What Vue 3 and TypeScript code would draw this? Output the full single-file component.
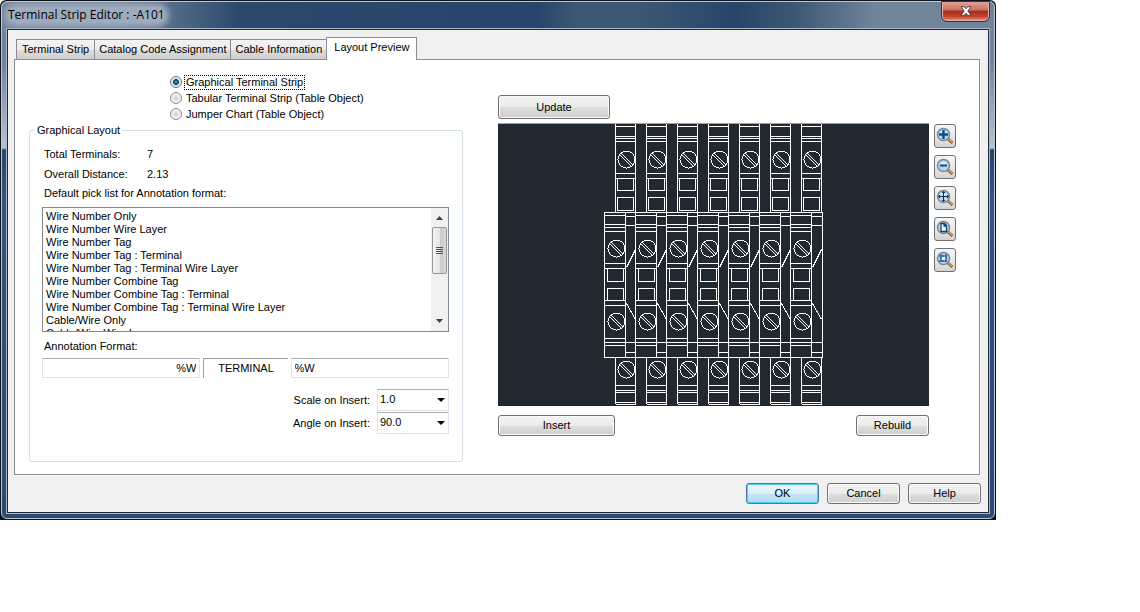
<script setup lang="ts">
import { ref } from 'vue'

const tabs = ['Terminal Strip', 'Catalog Code Assignment', 'Cable Information', 'Layout Preview']
const activeTab = ref('Layout Preview')

const layouts = [
  { id: 'graphical', label: 'Graphical Terminal Strip' },
  { id: 'tabular', label: 'Tabular Terminal Strip (Table Object)' },
  { id: 'jumper', label: 'Jumper Chart (Table Object)' },
]
const layout = ref('graphical')

const formats = [
  'Wire Number Only',
  'Wire Number Wire Layer',
  'Wire Number Tag',
  'Wire Number Tag : Terminal',
  'Wire Number Tag : Terminal Wire Layer',
  'Wire Number Combine Tag',
  'Wire Number Combine Tag : Terminal',
  'Wire Number Combine Tag : Terminal Wire Layer',
  'Cable/Wire Only',
  'Cable/Wire Wire Layer',
]
const picked = ref('')
const leftFormat = ref('%W')
const rightFormat = ref('%W')
const scale = ref('1.0')
const angle = ref('90.0')

const zoomTools = ['Zoom In', 'Zoom Out', 'Pan', 'Zoom Extents', 'Zoom Window']

const pitch = 31
const terminals = [0, 1, 2, 3, 4, 5, 6].map((n) => n * pitch)
</script>

<template>
  <main class="desktop">
    <section class="window" aria-label="Terminal Strip Editor">
      <div class="frame">
        <header class="titlebar">
          <h1 class="title">Terminal Strip Editor : -A101</h1>
          <button class="close" type="button" aria-label="Close">
            <svg width="12" height="10" viewBox="0 0 12 10">
              <path d="M1 .7h3.2L6 2.8 7.8.7H11L7.8 5 11 9.3H7.8L6 7.2 4.200 9.3H1L4.200 5z" fill="#fff" stroke="#54373c" stroke-width=".9" />
            </svg>
          </button>
        </header>

        <div class="client">
          <nav class="tabs" role="tablist">
            <button
              v-for="tab in tabs"
              :key="tab"
              type="button"
              role="tab"
              class="tab"
              :class="{ active: tab === activeTab }"
              :aria-selected="tab === activeTab"
              @click="activeTab = tab"
            >{{ tab }}</button>
          </nav>

          <div class="pane">
            <div class="settings">
              <div class="choices" role="radiogroup" aria-label="Layout type">
                <label v-for="item in layouts" :key="item.id" class="choice">
                  <input v-model="layout" type="radio" name="layout" :value="item.id" />
                  <span :class="{ focused: item.id === layout }">{{ item.label }}</span>
                </label>
              </div>

              <fieldset class="group">
                <legend>Graphical Layout</legend>
                <dl class="facts">
                  <dt>Total Terminals:</dt>
                  <dd>7</dd>
                  <dt>Overall Distance:</dt>
                  <dd>2.13</dd>
                </dl>
                <label class="caption" for="formats">Default pick list for Annotation format:</label>
                <div class="listbox">
                  <select id="formats" v-model="picked" size="9">
                    <option v-for="f in formats" :key="f" :value="f">{{ f }}</option>
                  </select>
                  <div class="scrollbar" aria-hidden="true">
                    <svg class="arrow" viewBox="0 0 7 4"><path d="M0 4L3.500 0 7 4z" /></svg>
                    <div class="thumb"><i></i><i></i><i></i><i></i></div>
                    <svg class="arrow end" viewBox="0 0 7 4"><path d="M0 0h7L3.500 4z" /></svg>
                  </div>
                </div>
                <label class="caption annotation" for="left-format">Annotation Format:</label>
                <div class="formats">
                  <input id="left-format" v-model="leftFormat" class="field right" type="text" />
                  <div class="middle">TERMINAL</div>
                  <input v-model="rightFormat" class="field" type="text" aria-label="Right annotation format" />
                </div>
                <div class="inserts">
                  <label for="scale">Scale on Insert:</label>
                  <div class="combo">
                    <select id="scale" v-model="scale"><option>1.0</option></select>
                  </div>
                  <label for="angle">Angle on Insert:</label>
                  <div class="combo">
                    <select id="angle" v-model="angle"><option>90.0</option></select>
                  </div>
                </div>
              </fieldset>
            </div>

            <div class="preview">
              <button type="button" class="btn update">Update</button>
              <div class="stage">
                <svg class="drawing" viewBox="498 124 431 282" role="img" aria-label="Terminal strip preview">
                  <defs>
                    <g id="screw">
                      <circle r="8.500" />
                      <path d="M-5.500-6.500L6.500 5.500M-7-5L5 7" />
                    </g>
                    <g id="rear">
                      <path d="M615.500 124v88M635.500 124v88M615.500 126.500h20M615.500 136.500h20M615.500 138.500h20M615.500 141.500h20M615.500 173.500h20M615.500 178.500h20" />
                      <path d="M617.500 178.500h16v12h-16zM617.500 197.500h16v13h-16z" />
                      <use href="#screw" x="626.500" y="159.500" />
                      <path d="M615.500 357v47M635.500 357v47M615.500 385.500h20M615.500 390.500h20M615.500 392.500h20M615.500 402.500h20M615.500 404.500h20" />
                      <use href="#screw" x="626.500" y="369.500" />
                    </g>
                    <g id="front">
                      <path d="M604.500 212v145M625.500 212v145M604.500 215.500h21M604.500 224.500h21M604.500 227.500h21M604.500 231.500h21M604.500 263.500h21M604.500 268.500h21M604.500 300.500h21M604.500 305.500h21M604.500 338.500h21M604.500 345.500h21" />
                      <path d="M607.500 268.500h16v13h-16zM607.500 288.500h16v12h-16z" />
                      <use href="#screw" x="616.500" y="248.500" />
                      <use href="#screw" x="616.500" y="321.500" />
                      <path d="M625.500 216.500h10M625.500 225.500h10M625.500 352.500h10M626.500 267.500L635.500 249.500M626.500 303.500L635.500 319.500" />
                    </g>
                  </defs>
                  <g class="lines">
                    <use v-for="x in terminals" :key="'r' + x" href="#rear" :x="x" />
                    <use v-for="x in terminals" :key="'f' + x" href="#front" :x="x" />
                    <path d="M604 212.500h218.500v145H604M604 342.500h218" />
                  </g>
                </svg>
                <div class="tools">
                  <button v-for="(tool, i) in zoomTools" :key="tool" type="button" class="tool" :aria-label="tool">
                    <svg width="18" height="18" viewBox="0 0 18 18">
                      <path d="M11 11l5.500 5" stroke="#7d5835" stroke-width="3" />
                      <path d="M11.500 11l5 4.500" stroke="#dfa560" stroke-width="1.400" />
                      <circle cx="7.500" cy="7.500" r="6" fill="#b5d6f2" stroke="#788694" stroke-width="1.500" />
                      <path d="M3.500 6.500a4.500 4.500 0 0 1 8 0z" fill="#deeffc" />
                      <path v-if="i === 0" d="M7.500 3v9M3 7.500h9" stroke="#0c4b8c" stroke-width="2.400" />
                      <path v-else-if="i === 1" d="M4 7.500h7" stroke="#0c4b8c" stroke-width="2" />
                      <g v-else-if="i === 2" fill="#122c45">
                        <path d="M7 3h1v9H7zM3 7h9v1H3z" />
                        <path d="M5.500 4L7.500 2l2 2zM5.500 11l2 2 2-2zM4 5.500L2 7.500l2 2zM11 5.500l2 2-2 2z" />
                      </g>
                      <path v-else-if="i === 3" d="M5 3.500h3.500l2 2v6H5zM8 3.500V6h2.500" fill="#fff" stroke="#0c4474" stroke-width="1.300" />
                      <g v-else fill="none" stroke="#174f80">
                        <path d="M5 5h5v5H5z" fill="#eaf6ff" />
                        <path d="M5 3v9M10 3v9M3 5h9M3 10h9" stroke-dasharray="2 1" />
                      </g>
                    </svg>
                  </button>
                </div>
                <div class="actions">
                  <button type="button" class="btn insert">Insert</button>
                  <button type="button" class="btn">Rebuild</button>
                </div>
              </div>
            </div>
          </div>

          <footer class="footer">
            <button type="button" class="btn default">OK</button>
            <button type="button" class="btn">Cancel</button>
            <button type="button" class="btn">Help</button>
          </footer>
        </div>
      </div>
    </section>
  </main>
</template>

<style>
body {
  margin: 0;
  background: #fff;
}
</style>

<style scoped>
* {
  box-sizing: border-box;
}

.desktop {
  padding-right: 144px;
  font: 11px/13px "Liberation Sans", Arial, sans-serif;
  color: #000;
}

button,
input,
select {
  margin: 0;
  font: inherit;
  color: inherit;
}

.window {
  min-width: 800px;
  padding: 1px;
  background: #10131c;
  border-radius: 6px 6px 0 0;
}

.frame {
  padding: 0 5px 5px;
  border: 1px solid #b9c7d6;
  border-radius: 6px;
  background:
    linear-gradient(90deg, #71849a 0%, #71849a 12%, #2b496d 24%, #27456a 54%, #3d5875 58%, #3d5875 64%, #27456a 74%, #3d5875 80%, #71849a 88%, #71849a 100%) 0 0 / 100% 28px no-repeat,
    linear-gradient(#71849a 0, #71849a 60px, #b9c2d0 146px, #27456a 148px, #35577e 200px, #2f5075 300px, #2c4a6c 100%);
}

.titlebar {
  display: flex;
  justify-content: space-between;
  align-items: flex-start;
  height: 27px;
}

.title {
  margin: 5px 0 0 1px;
  font: 12px/16px "Open Sans", "Noto Sans", sans-serif;
  border-radius: 8px;
  background: #9dabbd;
  box-shadow: 0 0 6px 4px #9dabbd;
  clip-path: inset(-5px -14px -6px -6px);
}

.close {
  display: grid;
  place-items: center;
  width: 47px;
  height: 19px;
  padding: 0;
  border: 1px solid #e5b0a8;
  border-top: 0;
  border-radius: 0 0 5px 5px;
  outline: 1px solid #37303f;
  background: linear-gradient(#dfa297 0, #c96f62 45%, #a92c1d 50%, #c1442d 80%, #e08a68 100%);
}

.client {
  padding: 7px 7px 8px 6px;
  background: #f0f0f0;
  border: 1px solid #20283a;
  outline: 1px solid #a7b9cb;
}

.tabs {
  display: flex;
  align-items: flex-end;
  padding-left: 2px;
}

.tab {
  height: 20px;
  margin-right: -1px;
  padding: 0 4px;
  border: 1px solid #898c95;
  border-bottom: 0;
  background: linear-gradient(#f3f3f3 0, #ebebeb 50%, #dcdcdc 52%, #cfcfcf 100%);
}

.tab:first-child {
  padding: 0 5px;
}

.tab.active {
  z-index: 1;
  height: 23px;
  margin-bottom: -1px;
  padding: 0 7px 3px;
  background: #fff;
}

.pane {
  display: grid;
  grid-template-columns: 434fr 458fr;
  column-gap: 35px;
  margin-right: 1px;
  padding: 14px 23px 12px 14px;
  border: 1px solid #898c95;
  background: #fff;
  box-shadow: 1px 1px #fff;
}

.choices {
  display: grid;
  padding-left: 141px;
}

.choice {
  display: flex;
  align-items: center;
  gap: 3px;
  height: 16px;
}

.choice input {
  appearance: none;
  width: 12px;
  height: 12px;
  border: 1px solid #8e8f8f;
  border-radius: 50%;
  background: radial-gradient(#d0d0d0, #f4f4f4 65%);
}

.choice input:checked {
  border-color: #5b7288;
  background: radial-gradient(circle at 50% 50%, #5fd0f0 0, #14516f 26%, #0e3048 36%, #e6eef3 46%);
}

.choice span {
  padding: 0 1px;
  outline: 1px none #000;
}

.choice .focused {
  outline-style: dotted;
}

.group {
  min-width: 0;
  margin: 2px 0 0;
  padding: 11px 13px 27px 12px;
  border: 1px solid #d5dfe5;
  border-radius: 3px;
}

.group legend {
  margin-left: -7px;
  padding: 0 2px;
}

.facts {
  display: grid;
  grid-template-columns: 103px 1fr;
  row-gap: 7px;
  margin: 0 0 6px 2px;
}

.facts dd {
  margin: 0;
}

.caption {
  display: block;
  margin: 0 0 7px 2px;
}

.listbox {
  display: flex;
  height: 125px;
  border: 1px solid #828790;
}

.listbox select {
  flex: 1;
  height: 123px;
  min-width: 0;
  padding: 2px 0 0;
  border: 0;
  outline: 0;
  overflow: hidden;
  scrollbar-width: none;
  background: #fff;
}

.listbox option {
  min-height: 13px;
  padding: 0 3px;
  line-height: 13px;
}

.scrollbar {
  display: flex;
  flex-direction: column;
  align-items: center;
  width: 17px;
  padding: 8px 1px;
  background: #f0f0f0;
}

.arrow {
  width: 7px;
  height: 4px;
  flex: none;
  fill: #404040;
}

.arrow.end {
  margin-top: auto;
}

.thumb {
  display: grid;
  place-content: center;
  gap: 1px;
  width: 15px;
  height: 47px;
  margin-top: 7px;
  border: 1px solid #979797;
  border-radius: 2px;
  background: linear-gradient(90deg, #f5f5f5, #e4e4e4 50%, #cbcbcb 55%, #d8d8d8);
}

.thumb i {
  width: 7px;
  height: 1px;
  background: #50535a;
}

.annotation {
  margin-top: 8px;
  margin-bottom: 5px;
}

.formats {
  display: grid;
  grid-template-columns: 158fr 84fr 158fr;
  gap: 3px;
}

.field {
  min-width: 0;
  height: 20px;
  padding: 0 3px;
  border: 1px solid #e2e3ea;
  border-top-color: #abadb3;
  border-radius: 1px;
  background: #fff;
}

.field.right {
  text-align: right;
}

.middle {
  border: 1px solid #a0a0a0;
  border-width: 1px 0 0 1px;
  text-align: center;
  line-height: 19px;
}

.inserts {
  display: grid;
  grid-template-columns: 1fr 72px;
  gap: 1px 7px;
  align-items: center;
  margin-top: 11px;
  text-align: right;
}

.combo {
  position: relative;
}

.combo::after {
  content: "";
  position: absolute;
  top: 9px;
  right: 4px;
  border: 4px solid transparent;
  border-top-color: #000;
  border-bottom: 0;
  pointer-events: none;
}

.combo select {
  display: block;
  appearance: none;
  width: 100%;
  height: 22px;
  padding: 0 16px 2px 2px;
  border: 1px solid #e2e3ea;
  border-top-color: #abadb3;
  border-radius: 1px;
  background: #fff;
}

.preview {
  padding-top: 21px;
}

.btn {
  width: 73px;
  height: 21px;
  padding: 0;
  border: 1px solid #707070;
  border-radius: 3px;
  background: linear-gradient(#f3f3f3 0, #ebebeb 50%, #dddddd 52%, #cfcfcf 100%);
  box-shadow: inset 0 0 0 1px #fafafa;
}

.btn.update {
  display: block;
  width: 112px;
  height: 24px;
  margin-bottom: 4px;
}

.btn.insert {
  width: 117px;
}

.btn.default {
  border-color: #3c7fb1;
  background: linear-gradient(#eef8fd 0, #dceffa 50%, #c3e4f6 52%, #b5daf0 100%);
  box-shadow: inset 0 0 0 1px #48d0f5;
}

.stage {
  display: grid;
  grid-template-columns: 1fr 22px;
  gap: 9px 5px;
}

.drawing {
  display: block;
  width: 100%;
  border-top: 1px solid #a0a0a0;
  background: #212830;
}

.lines {
  fill: none;
  stroke: #fff;
  stroke-width: 1;
  shape-rendering: crispEdges;
}

.tools {
  display: flex;
  flex-direction: column;
  gap: 7px;
  padding-top: 1px;
}

.tool {
  display: grid;
  place-items: center;
  width: 22px;
  height: 24px;
  padding: 0;
  border: 1px solid #707070;
  border-radius: 3px;
  background: linear-gradient(#f4f4f4, #e9e9e9 50%, #d4d4d4);
}

.actions {
  display: flex;
  justify-content: space-between;
}

.footer {
  display: flex;
  justify-content: flex-end;
  gap: 8px;
  padding-top: 8px;
}
</style>
